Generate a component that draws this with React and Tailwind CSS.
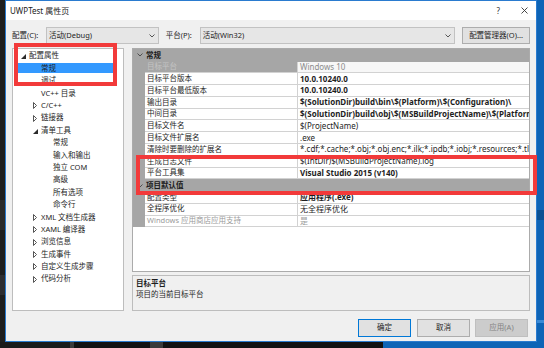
import React from "react";

const tree = [
  { label: "配置属性", level: 0, arrow: "open" },
  { label: "常规", level: 1, selected: true },
  { label: "调试", level: 1 },
  { label: "VC++ 目录", level: 1 },
  { label: "C/C++", level: 1, arrow: "closed" },
  { label: "链接器", level: 1, arrow: "closed" },
  { label: "清单工具", level: 1, arrow: "open" },
  { label: "常规", level: 2 },
  { label: "输入和输出", level: 2 },
  { label: "独立 COM", level: 2 },
  { label: "高级", level: 2 },
  { label: "所有选项", level: 2 },
  { label: "命令行", level: 2 },
  { label: "XML 文档生成器", level: 1, arrow: "closed" },
  { label: "XAML 编译器", level: 1, arrow: "closed" },
  { label: "浏览信息", level: 1, arrow: "closed" },
  { label: "生成事件", level: 1, arrow: "closed" },
  { label: "自定义生成步骤", level: 1, arrow: "closed" },
  { label: "代码分析", level: 1, arrow: "closed" },
];

const general = [
  { name: "目标平台", value: "Windows 10", selected: true },
  { name: "目标平台版本", value: "10.0.10240.0", bold: true },
  { name: "目标平台最低版本", value: "10.0.10240.0", bold: true },
  { name: "输出目录", value: "$(SolutionDir)build\\bin\\$(Platform)\\$(Configuration)\\", bold: true },
  { name: "中间目录", value: "$(SolutionDir)build\\obj\\$(MSBuildProjectName)\\$(Platform)\\$(Configuration)\\", bold: true },
  { name: "目标文件名", value: "$(ProjectName)" },
  { name: "目标文件扩展名", value: ".exe" },
  { name: "清除时要删除的扩展名", value: "*.cdf;*.cache;*.obj;*.obj.enc;*.ilk;*.ipdb;*.iobj;*.resources;*.tlb;*.tli;*.tlh;*.tmp" },
  { name: "生成日志文件", value: "$(IntDir)$(MSBuildProjectName).log" },
  { name: "平台工具集", value: "Visual Studio 2015 (v140)", bold: true },
];

const defaults = [
  { name: "配置类型", value: "应用程序(.exe)", bold: true },
  { name: "全程序优化", value: "无全程序优化" },
  { name: "Windows 应用商店应用支持", value: "是", disabled: true },
];

function Arrow({ kind }) {
  if (kind === "open") {
    return (
      <svg width="5" height="5" viewBox="0 0 5 5" className="mt-[1px]">
        <path d="M5 0 L5 5 L0 5 Z" fill="#2b2b2b" />
      </svg>
    );
  }
  if (kind === "closed") {
    return (
      <svg width="4" height="7" viewBox="0 0 4 7">
        <path d="M0.5 0.5 L3.5 3.5 L0.5 6.5 Z" fill="none" stroke="#555" strokeWidth="1" />
      </svg>
    );
  }
  return null;
}

function Chevron({ className }) {
  return (
    <svg width="6" height="4" viewBox="0 0 6 4" className={className}>
      <path d="M0.5 0.5 L3 3 L5.5 0.5" fill="none" stroke="#444" strokeWidth="0.9" />
    </svg>
  );
}

function TreeRow({ item }) {
  const pad = { 0: "pl-[8px]", 1: "pl-[20px]", 2: "pl-[32px]" }[item.level];
  return (
    <div className={`flex h-[12.4px] items-center ${pad}`}>
      <div className="flex w-[8px] items-center">
        <Arrow kind={item.arrow} />
      </div>
      <span className="relative leading-none">
        {item.selected && (
          <span className="absolute left-[-27px] top-[-2px] h-[10px] w-[101px] bg-[#3399ff]" />
        )}
        <span className="relative">{item.label}</span>
      </span>
    </div>
  );
}

function GroupHeader({ label }) {
  return (
    <div className="flex h-[12.5px] items-center bg-[#a6a6a6]">
      <div className="flex w-[13px] justify-center">
        <Chevron />
      </div>
      <span className="font-bold leading-none text-[#1a1a1a]">{label}</span>
    </div>
  );
}

function PropRow({ row }) {
  return (
    <div className="flex h-[11.8px]">
      <div className="w-[12px] shrink-0 bg-[#a6a6a6]" />
      <div
        className={`flex w-[153px] shrink-0 items-center border-b border-r border-[#d2d2d2] pl-[2px] leading-none ${
          row.selected ? "bg-[#a6a6a6] text-[#c4c4c4]" : row.disabled ? "bg-white text-[#9a9a9a]" : "bg-white"
        }`}
      >
        {row.name}
      </div>
      <div
        className={`flex min-w-0 flex-1 items-center overflow-hidden whitespace-nowrap border-b border-[#d2d2d2] pl-[2px] text-[8px] leading-none ${
          row.selected ? "bg-[#f7f7f7] text-[#8c8c8c]" : row.disabled ? "bg-white text-[#9a9a9a]" : "bg-white"
        } ${row.bold ? "font-bold" : ""}`}
      >
        {row.value}
      </div>
    </div>
  );
}

export default function App() {
  return (
    <div className="relative h-[348px] w-[544px] overflow-hidden bg-[#1b1b1b] font-['Noto_Sans','Noto_Sans_CJK_SC',sans-serif] text-[7.5px] text-[#1e1e1e]">
      <div className="flex h-[342px]">
        <div className="flex w-[5px] flex-col bg-[#1e1e1e]">
          <div className="h-[200px]" />
          <div className="h-[30px] bg-[#2a2a2a]" />
          <div className="h-[45px]" />
          <div className="h-[20px] bg-[#2d2d30]" />
        </div>

        <div className="flex w-[532px] flex-col border border-[#2a7bcf] bg-[#f0f0f0]">
          <div className="flex h-[19px] items-center bg-white pl-[4px] pr-[8px]">
            <span className="text-[8px] leading-none text-[#222]">UWPTest 属性页</span>
            <span className="ml-auto mr-[21px] text-[8px] leading-none text-[#333]">?</span>
            <svg width="7" height="7" viewBox="0 0 7 7">
              <path d="M0.5 0.5 L6.5 6.5 M6.5 0.5 L0.5 6.5" stroke="#333" strokeWidth="0.9" />
            </svg>
          </div>

          <div className="flex flex-1 flex-col px-[6px]">
            <div className="mt-[7px] flex h-[17px] items-center">
              <span className="w-[34px] leading-none">配置(C):</span>
              <div className="flex h-full w-[113px] items-center border border-[#c2c2c2] bg-[#e6e6e6] pl-[2px] pr-[3px]">
                <span className="leading-none">活动(Debug)</span>
                <Chevron className="ml-auto" />
              </div>
              <span className="ml-[7px] w-[34px] leading-none">平台(P):</span>
              <div className="flex h-full w-[256px] items-center border border-[#c2c2c2] bg-[#e6e6e6] pl-[2px] pr-[3px]">
                <span className="leading-none">活动(Win32)</span>
                <Chevron className="ml-auto" />
              </div>
              <div className="ml-[7px] flex h-full w-[68px] items-center justify-center border border-[#adadad] bg-[#e1e1e1] leading-none">
                配置管理器(O)...
              </div>
            </div>

            <div className="mt-[4px] flex h-[263px]">
              <div className="w-[115px] border border-[#bdbdbd] bg-white pt-[1px]">
                {tree.map((item, i) => (
                  <TreeRow key={i} item={item} />
                ))}
              </div>

              <div className="ml-[8px] flex w-[398px] flex-col">
                <div className="flex h-[224px] flex-col border border-[#ababab] bg-white">
                  <GroupHeader label="常规" />
                  {general.map((row, i) => (
                    <PropRow key={i} row={row} />
                  ))}
                  <GroupHeader label="项目默认值" />
                  {defaults.map((row, i) => (
                    <PropRow key={i} row={row} />
                  ))}
                  <div className="flex-1 bg-white" />
                </div>
                <div className="mt-[3px] flex h-[36px] flex-col border border-[#bdbdbd] bg-[#f0f0f0] pl-[3px] pt-[4px] leading-none">
                  <span className="font-bold">目标平台</span>
                  <span className="mt-[3px]">项目的当前目标平台</span>
                </div>
              </div>
            </div>

            <div className="mt-[8px] flex h-[18px] justify-end pr-[2px]">
              <div className="flex w-[53px] items-center justify-center border border-[#0078d7] bg-[#e1e1e1] leading-none">
                确定
              </div>
              <div className="ml-[6px] flex w-[53px] items-center justify-center border border-[#adadad] bg-[#e1e1e1] leading-none">
                取消
              </div>
              <div className="ml-[5px] flex w-[53px] items-center justify-center border border-[#bfbfbf] bg-[#cccccc] leading-none text-[#838383]">
                应用(A)
              </div>
            </div>
          </div>
        </div>

        <div className="flex flex-1 flex-col bg-[#0e64b6]">
          <div className="h-[210px]" />
          <div className="h-[10px] bg-[#0a4f92]" />
          <div className="h-[100px]" />
          <div className="h-[3px] bg-[#3a8ad6]" />
        </div>
      </div>
      <div className="flex h-[6px]">
        <div className="w-[70px] bg-[#1a1a1a]" />
        <div className="w-[4px] bg-[#3a3a3a]" />
        <div className="w-[76px] bg-[#121212]" />
        <div className="w-[13px] bg-[#3a3a3a]" />
        <div className="flex-1 bg-[#121212]" />
        <div className="w-[161px] bg-[#0e64b6]" />
      </div>

      <div className="absolute left-[14px] top-[43px] h-[43px] w-[103px] border-[4px] border-[#f23a3a]" />
      <div className="absolute left-[136px] top-[155px] h-[40px] w-[401px] border-[4px] border-[#f23a3a]" />
    </div>
  );
}
